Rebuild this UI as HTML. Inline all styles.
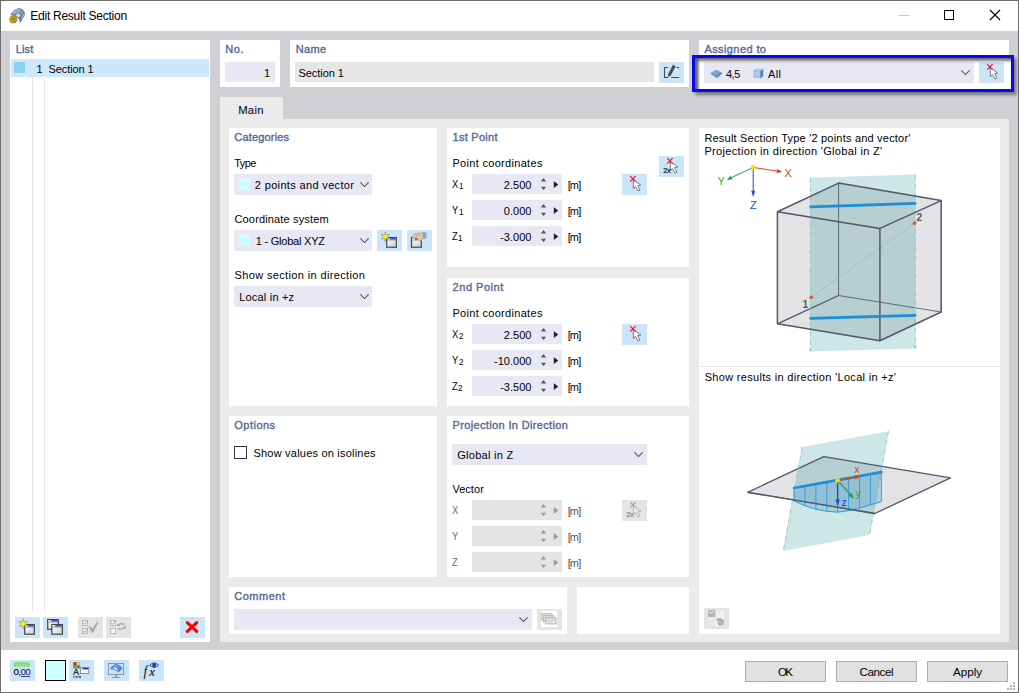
<!DOCTYPE html>
<html>
<head>
<meta charset="utf-8">
<title>Edit Result Section</title>
<style>
html,body{margin:0;padding:0;}
body{width:1019px;height:693px;overflow:hidden;background:#d0d0d4;font-family:"Liberation Sans",sans-serif;font-size:11px;color:#000;position:relative;}
.a{position:absolute;}
.t{position:absolute;white-space:nowrap;}
svg{position:absolute;overflow:visible;}
</style>
</head>
<body>
<div class="a" style="left:0px;top:0px;width:1019px;height:693px;background:#d0d0d4;"></div>
<div class="a" style="left:1px;top:1px;width:1017px;height:30px;background:#fff;"></div>
<div class="a" style="left:1px;top:650px;width:1017px;height:42px;background:#fff;"></div>
<div class="a" style="left:0;top:0;width:1017px;height:691px;border:1px solid #6e6e6e;"></div>
<div class="t" style="left:30.30px;top:8.84px;font-size:12px;line-height:14px;letter-spacing:-0.255px;">Edit Result Section</div>
<svg style="left:890px;top:5px" width="120" height="22" viewBox="0 0 120 22"><path d="M9 10.5 H19" stroke="#c4c4c4" stroke-width="1"/><rect x="54.5" y="5.5" width="9" height="9" fill="none" stroke="#000" stroke-width="1"/><path d="M100 5 L110 15 M110 5 L100 15" stroke="#000" stroke-width="1.1"/></svg>
<div class="a" style="left:699px;top:58px;width:312px;height:31px;background:#fff;"></div>
<div class="a" style="left:10px;top:40px;width:200px;height:602px;background:#fff;"></div>
<div class="t" style="left:15.80px;top:42.19px;font-size:11px;line-height:14px;letter-spacing:0.127px;color:#566a96;-webkit-text-stroke:0.38px #566a96;">List</div>
<div class="a" style="left:11px;top:59px;width:198px;height:18px;background:#cce8ff;"></div>
<div class="a" style="left:14px;top:62px;width:11px;height:11px;background:#8bd2ef;"></div>
<div class="a" style="left:32px;top:59px;width:1px;height:553px;background:#e6e6e6;"></div>
<div class="a" style="left:44px;top:59px;width:1px;height:553px;background:#e6e6e6;"></div>
<div class="t" style="left:36.60px;top:62.19px;font-size:11px;line-height:14px;">1</div>
<div class="t" style="left:48.60px;top:62.19px;font-size:11px;line-height:14px;letter-spacing:-0.108px;">Section 1</div>
<div class="a" style="left:15px;top:617px;width:25px;height:21px;background:#cce4f7;"></div>
<div class="a" style="left:43px;top:617px;width:25px;height:21px;background:#cce4f7;"></div>
<div class="a" style="left:78px;top:617px;width:25px;height:21px;background:#e4e4e4;"></div>
<div class="a" style="left:106px;top:617px;width:25px;height:21px;background:#e4e4e4;"></div>
<div class="a" style="left:180px;top:617px;width:25px;height:21px;background:#cce4f7;"></div>
<div class="a" style="left:220px;top:40px;width:60px;height:47px;background:#fff;"></div>
<div class="t" style="left:225.30px;top:42.19px;font-size:11px;line-height:14px;letter-spacing:0.541px;color:#566a96;-webkit-text-stroke:0.38px #566a96;">No.</div>
<div class="a" style="left:225px;top:62px;width:50px;height:20px;background:#e7e8f4;"></div>
<div class="t" style="left:263.88px;top:66.19px;font-size:11px;line-height:14px;">1</div>
<div class="a" style="left:290px;top:40px;width:399px;height:47px;background:#fff;"></div>
<div class="t" style="left:295.80px;top:42.19px;font-size:11px;line-height:14px;letter-spacing:0.286px;color:#566a96;-webkit-text-stroke:0.38px #566a96;">Name</div>
<div class="a" style="left:295px;top:62px;width:359px;height:20px;background:#e6e6e6;"></div>
<div class="t" style="left:298.50px;top:66.19px;font-size:11px;line-height:14px;letter-spacing:-0.058px;">Section 1</div>
<div class="a" style="left:659px;top:62px;width:25px;height:21px;background:#cce4f7;"></div>
<div class="a" style="left:699px;top:40px;width:310px;height:47px;background:#fff;"></div>
<div class="t" style="left:704.40px;top:42.19px;font-size:11px;line-height:14px;letter-spacing:0.412px;color:#566a96;-webkit-text-stroke:0.38px #566a96;">Assigned to</div>
<div class="a" style="left:704px;top:62px;width:270px;height:21px;background:#e7e8f4;"></div>
<div class="t" style="left:725.90px;top:66.79px;font-size:11px;line-height:14px;letter-spacing:-0.396px;">4,5</div>
<div class="t" style="left:768.00px;top:66.79px;font-size:11px;line-height:14px;letter-spacing:0.388px;">All</div>
<svg style="left:960px;top:70px" width="10" height="6" viewBox="0 0 10 6"><path d="M1.4 0.4 L5.5 4.5 L9.6 0.4" fill="none" stroke="#505050" stroke-width="1.05"/></svg>
<div class="a" style="left:979px;top:62px;width:25px;height:21px;background:#cce4f7;"></div>
<div class="a" style="left:220px;top:97px;width:63px;height:23px;background:#ebebeb;"></div>
<div class="a" style="left:220px;top:119px;width:789px;height:523px;background:#ebebeb;"></div>
<div class="t" style="left:238.20px;top:103.08px;font-size:11.3px;line-height:14px;letter-spacing:0.269px;">Main</div>
<div class="a" style="left:229px;top:128px;width:208px;height:278px;background:#fff;"></div>
<div class="t" style="left:234.30px;top:130.19px;font-size:11px;line-height:14px;letter-spacing:0.178px;color:#566a96;-webkit-text-stroke:0.38px #566a96;">Categories</div>
<div class="t" style="left:234.30px;top:156.19px;font-size:11px;line-height:14px;letter-spacing:-0.583px;">Type</div>
<div class="a" style="left:234px;top:174px;width:138px;height:21px;background:#e7e8f4;"></div>
<div class="a" style="left:239px;top:179px;width:11px;height:11px;background:#ccffff;"></div>
<div class="t" style="left:254.80px;top:178.19px;font-size:11px;line-height:14px;letter-spacing:0.347px;">2 points and vector</div>
<svg style="left:359px;top:182px" width="10" height="6" viewBox="0 0 10 6"><path d="M1.4 0.4 L5.5 4.5 L9.6 0.4" fill="none" stroke="#505050" stroke-width="1.05"/></svg>
<div class="t" style="left:234.50px;top:212.19px;font-size:11px;line-height:14px;letter-spacing:0.150px;">Coordinate system</div>
<div class="a" style="left:234px;top:230px;width:138px;height:21px;background:#e7e8f4;"></div>
<div class="a" style="left:239px;top:235px;width:11px;height:11px;background:#ccffff;"></div>
<div class="t" style="left:255.70px;top:234.19px;font-size:11px;line-height:14px;letter-spacing:-0.218px;">1 - Global XYZ</div>
<svg style="left:359px;top:238px" width="10" height="6" viewBox="0 0 10 6"><path d="M1.4 0.4 L5.5 4.5 L9.6 0.4" fill="none" stroke="#505050" stroke-width="1.05"/></svg>
<div class="a" style="left:377px;top:230px;width:25px;height:21px;background:#cce4f7;"></div>
<div class="a" style="left:407px;top:230px;width:25px;height:21px;background:#cce4f7;"></div>
<div class="t" style="left:234.50px;top:268.19px;font-size:11px;line-height:14px;letter-spacing:0.363px;">Show section in direction</div>
<div class="a" style="left:234px;top:286px;width:138px;height:21px;background:#e7e8f4;"></div>
<div class="t" style="left:239.20px;top:290.19px;font-size:11px;line-height:14px;letter-spacing:0.201px;">Local in +z</div>
<svg style="left:359px;top:294px" width="10" height="6" viewBox="0 0 10 6"><path d="M1.4 0.4 L5.5 4.5 L9.6 0.4" fill="none" stroke="#505050" stroke-width="1.05"/></svg>
<div class="a" style="left:447px;top:128px;width:242px;height:139px;background:#fff;"></div>
<div class="t" style="left:452.60px;top:130.19px;font-size:11px;line-height:14px;letter-spacing:0.262px;color:#566a96;-webkit-text-stroke:0.38px #566a96;">1st Point</div>
<div class="t" style="left:452.40px;top:156.19px;font-size:11px;line-height:14px;letter-spacing:0.313px;">Point coordinates</div>
<div class="a" style="left:472px;top:174px;width:90px;height:20px;background:#e7e8f4;"></div>
<div class="t" style="left:452.40px;top:177.19px;font-size:11px;line-height:14px;transform:scaleX(0.85);transform-origin:0 0;">X</div>
<div class="t" style="left:458.84px;top:178.88px;font-size:9px;line-height:14px;transform:scaleX(0.9);transform-origin:0 0;">1</div>
<div class="t" style="left:503.87px;top:178.19px;font-size:11px;line-height:14px;">2.500</div>
<svg style="left:472px;top:174px" width="90" height="20" viewBox="0 0 90 20"><path d="M68.8 7.5 L71.5 4.1 L74.2 7.5 Z M68.8 12.8 L71.5 15.9 L74.2 12.8 Z" fill="#5a5a5a"/><path d="M81.8 7.2 L86.3 10.6 L81.8 14.0 Z" fill="#202020"/></svg>
<div class="t" style="left:567.70px;top:178.19px;font-size:11px;line-height:14px;letter-spacing:-0.888px;">[m]</div>
<div class="a" style="left:472px;top:200px;width:90px;height:20px;background:#e7e8f4;"></div>
<div class="t" style="left:452.40px;top:203.19px;font-size:11px;line-height:14px;transform:scaleX(0.85);transform-origin:0 0;">Y</div>
<div class="t" style="left:458.84px;top:204.88px;font-size:9px;line-height:14px;transform:scaleX(0.9);transform-origin:0 0;">1</div>
<div class="t" style="left:503.87px;top:204.19px;font-size:11px;line-height:14px;">0.000</div>
<svg style="left:472px;top:200px" width="90" height="20" viewBox="0 0 90 20"><path d="M68.8 7.5 L71.5 4.1 L74.2 7.5 Z M68.8 12.8 L71.5 15.9 L74.2 12.8 Z" fill="#5a5a5a"/><path d="M81.8 7.2 L86.3 10.6 L81.8 14.0 Z" fill="#202020"/></svg>
<div class="t" style="left:567.70px;top:204.19px;font-size:11px;line-height:14px;letter-spacing:-0.888px;">[m]</div>
<div class="a" style="left:472px;top:226px;width:90px;height:20px;background:#e7e8f4;"></div>
<div class="t" style="left:452.40px;top:229.19px;font-size:11px;line-height:14px;transform:scaleX(0.85);transform-origin:0 0;">Z</div>
<div class="t" style="left:458.31px;top:230.88px;font-size:9px;line-height:14px;transform:scaleX(0.9);transform-origin:0 0;">1</div>
<div class="t" style="left:500.21px;top:230.19px;font-size:11px;line-height:14px;">-3.000</div>
<svg style="left:472px;top:226px" width="90" height="20" viewBox="0 0 90 20"><path d="M68.8 7.5 L71.5 4.1 L74.2 7.5 Z M68.8 12.8 L71.5 15.9 L74.2 12.8 Z" fill="#5a5a5a"/><path d="M81.8 7.2 L86.3 10.6 L81.8 14.0 Z" fill="#202020"/></svg>
<div class="t" style="left:567.70px;top:230.19px;font-size:11px;line-height:14px;letter-spacing:-0.888px;">[m]</div>
<div class="a" style="left:622px;top:174px;width:25px;height:21px;background:#cce4f7;"></div>
<div class="a" style="left:659px;top:156px;width:25px;height:21px;background:#cce4f7;"></div>
<div class="a" style="left:447px;top:278px;width:242px;height:128px;background:#fff;"></div>
<div class="t" style="left:452.60px;top:280.19px;font-size:11px;line-height:14px;letter-spacing:0.527px;color:#566a96;-webkit-text-stroke:0.38px #566a96;">2nd Point</div>
<div class="t" style="left:452.40px;top:306.19px;font-size:11px;line-height:14px;letter-spacing:0.313px;">Point coordinates</div>
<div class="a" style="left:472px;top:324px;width:90px;height:20px;background:#e7e8f4;"></div>
<div class="t" style="left:452.40px;top:327.19px;font-size:11px;line-height:14px;transform:scaleX(0.85);transform-origin:0 0;">X</div>
<div class="t" style="left:458.84px;top:328.88px;font-size:9px;line-height:14px;transform:scaleX(0.9);transform-origin:0 0;">2</div>
<div class="t" style="left:503.87px;top:328.19px;font-size:11px;line-height:14px;">2.500</div>
<svg style="left:472px;top:324px" width="90" height="20" viewBox="0 0 90 20"><path d="M68.8 7.5 L71.5 4.1 L74.2 7.5 Z M68.8 12.8 L71.5 15.9 L74.2 12.8 Z" fill="#5a5a5a"/><path d="M81.8 7.2 L86.3 10.6 L81.8 14.0 Z" fill="#202020"/></svg>
<div class="t" style="left:567.70px;top:328.19px;font-size:11px;line-height:14px;letter-spacing:-0.888px;">[m]</div>
<div class="a" style="left:472px;top:350px;width:90px;height:20px;background:#e7e8f4;"></div>
<div class="t" style="left:452.40px;top:353.19px;font-size:11px;line-height:14px;transform:scaleX(0.85);transform-origin:0 0;">Y</div>
<div class="t" style="left:458.84px;top:354.88px;font-size:9px;line-height:14px;transform:scaleX(0.9);transform-origin:0 0;">2</div>
<div class="t" style="left:494.09px;top:354.19px;font-size:11px;line-height:14px;">-10.000</div>
<svg style="left:472px;top:350px" width="90" height="20" viewBox="0 0 90 20"><path d="M68.8 7.5 L71.5 4.1 L74.2 7.5 Z M68.8 12.8 L71.5 15.9 L74.2 12.8 Z" fill="#5a5a5a"/><path d="M81.8 7.2 L86.3 10.6 L81.8 14.0 Z" fill="#202020"/></svg>
<div class="t" style="left:567.70px;top:354.19px;font-size:11px;line-height:14px;letter-spacing:-0.888px;">[m]</div>
<div class="a" style="left:472px;top:376px;width:90px;height:20px;background:#e7e8f4;"></div>
<div class="t" style="left:452.40px;top:379.19px;font-size:11px;line-height:14px;transform:scaleX(0.85);transform-origin:0 0;">Z</div>
<div class="t" style="left:458.31px;top:380.88px;font-size:9px;line-height:14px;transform:scaleX(0.9);transform-origin:0 0;">2</div>
<div class="t" style="left:500.21px;top:380.19px;font-size:11px;line-height:14px;">-3.500</div>
<svg style="left:472px;top:376px" width="90" height="20" viewBox="0 0 90 20"><path d="M68.8 7.5 L71.5 4.1 L74.2 7.5 Z M68.8 12.8 L71.5 15.9 L74.2 12.8 Z" fill="#5a5a5a"/><path d="M81.8 7.2 L86.3 10.6 L81.8 14.0 Z" fill="#202020"/></svg>
<div class="t" style="left:567.70px;top:380.19px;font-size:11px;line-height:14px;letter-spacing:-0.888px;">[m]</div>
<div class="a" style="left:622px;top:324px;width:25px;height:21px;background:#cce4f7;"></div>
<div class="a" style="left:229px;top:416px;width:208px;height:161px;background:#fff;"></div>
<div class="t" style="left:234.30px;top:418.19px;font-size:11px;line-height:14px;letter-spacing:0.482px;color:#566a96;-webkit-text-stroke:0.38px #566a96;">Options</div>
<div class="a" style="left:234px;top:446px;width:11px;height:11px;border:1px solid #333;background:#fff;"></div>
<div class="t" style="left:253.50px;top:446.19px;font-size:11px;line-height:14px;letter-spacing:0.209px;">Show values on isolines</div>
<div class="a" style="left:447px;top:416px;width:242px;height:161px;background:#fff;"></div>
<div class="t" style="left:452.60px;top:418.19px;font-size:11px;line-height:14px;letter-spacing:0.350px;color:#566a96;-webkit-text-stroke:0.38px #566a96;">Projection In Direction</div>
<div class="a" style="left:452px;top:444px;width:195px;height:21px;background:#e7e8f4;"></div>
<div class="t" style="left:457.30px;top:448.19px;font-size:11px;line-height:14px;letter-spacing:0.271px;">Global in Z</div>
<svg style="left:633px;top:452px" width="10" height="6" viewBox="0 0 10 6"><path d="M1.4 0.4 L5.5 4.5 L9.6 0.4" fill="none" stroke="#505050" stroke-width="1.05"/></svg>
<div class="t" style="left:452.40px;top:482.19px;font-size:11px;line-height:14px;letter-spacing:0.043px;">Vector</div>
<div class="a" style="left:472px;top:500px;width:90px;height:20px;background:#e4e4e4;"></div>
<div class="t" style="left:452.40px;top:503.19px;font-size:11px;line-height:14px;color:#6a6a6a;transform:scaleX(0.85);transform-origin:0 0;">X</div>
<svg style="left:472px;top:500px" width="90" height="20" viewBox="0 0 90 20"><path d="M68.8 7.5 L71.5 4.1 L74.2 7.5 Z M68.8 12.8 L71.5 15.9 L74.2 12.8 Z" fill="#9a9a9a"/><path d="M81.8 7.2 L86.3 10.6 L81.8 14.0 Z" fill="#9a9a9a"/></svg>
<div class="t" style="left:567.70px;top:504.19px;font-size:11px;line-height:14px;letter-spacing:-0.888px;color:#555;">[m]</div>
<div class="a" style="left:472px;top:526px;width:90px;height:20px;background:#e4e4e4;"></div>
<div class="t" style="left:452.40px;top:529.19px;font-size:11px;line-height:14px;color:#6a6a6a;transform:scaleX(0.85);transform-origin:0 0;">Y</div>
<svg style="left:472px;top:526px" width="90" height="20" viewBox="0 0 90 20"><path d="M68.8 7.5 L71.5 4.1 L74.2 7.5 Z M68.8 12.8 L71.5 15.9 L74.2 12.8 Z" fill="#9a9a9a"/><path d="M81.8 7.2 L86.3 10.6 L81.8 14.0 Z" fill="#9a9a9a"/></svg>
<div class="t" style="left:567.70px;top:530.19px;font-size:11px;line-height:14px;letter-spacing:-0.888px;color:#555;">[m]</div>
<div class="a" style="left:472px;top:552px;width:90px;height:20px;background:#e4e4e4;"></div>
<div class="t" style="left:452.40px;top:555.19px;font-size:11px;line-height:14px;color:#6a6a6a;transform:scaleX(0.85);transform-origin:0 0;">Z</div>
<svg style="left:472px;top:552px" width="90" height="20" viewBox="0 0 90 20"><path d="M68.8 7.5 L71.5 4.1 L74.2 7.5 Z M68.8 12.8 L71.5 15.9 L74.2 12.8 Z" fill="#9a9a9a"/><path d="M81.8 7.2 L86.3 10.6 L81.8 14.0 Z" fill="#9a9a9a"/></svg>
<div class="t" style="left:567.70px;top:556.19px;font-size:11px;line-height:14px;letter-spacing:-0.888px;color:#555;">[m]</div>
<div class="a" style="left:622px;top:500px;width:25px;height:21px;background:#e4e4e4;"></div>
<div class="a" style="left:229px;top:587px;width:338px;height:47px;background:#fff;"></div>
<div class="t" style="left:234.30px;top:589.19px;font-size:11px;line-height:14px;letter-spacing:0.503px;color:#566a96;-webkit-text-stroke:0.38px #566a96;">Comment</div>
<div class="a" style="left:234px;top:609px;width:298px;height:21px;background:#e7e8f4;"></div>
<svg style="left:518px;top:617px" width="10" height="6" viewBox="0 0 10 6"><path d="M1.4 0.4 L5.5 4.5 L9.6 0.4" fill="none" stroke="#505050" stroke-width="1.05"/></svg>
<div class="a" style="left:537px;top:609px;width:25px;height:21px;background:#e4e4e4;"></div>
<div class="a" style="left:577px;top:587px;width:112px;height:47px;background:#fff;"></div>
<div class="a" style="left:699px;top:128px;width:301px;height:506px;background:#fff;"></div>
<div class="t" style="left:704.40px;top:131.19px;font-size:11px;line-height:14px;letter-spacing:0.204px;">Result Section Type '2 points and vector'</div>
<div class="t" style="left:704.40px;top:144.19px;font-size:11px;line-height:14px;letter-spacing:0.339px;">Projection in direction 'Global in Z'</div>
<div class="a" style="left:699px;top:366px;width:301px;height:1px;background:#e4e4e4;"></div>
<div class="t" style="left:704.70px;top:370.19px;font-size:11px;line-height:14px;letter-spacing:0.311px;">Show results in direction 'Local in +z'</div>
<div class="a" style="left:704px;top:608px;width:25px;height:21px;background:#e4e4e4;"></div>
<div class="a" style="left:10px;top:660px;width:25px;height:21px;background:#cce4f7;"></div>
<div class="a" style="left:69px;top:660px;width:25px;height:21px;background:#cce4f7;"></div>
<div class="a" style="left:104px;top:660px;width:25px;height:21px;background:#cce4f7;"></div>
<div class="a" style="left:139px;top:660px;width:25px;height:21px;background:#cce4f7;"></div>
<div class="a" style="left:45px;top:660px;width:19px;height:19px;border:1px solid #000;background:#ccffff;"></div>
<div class="a" style="left:745px;top:661px;width:79px;height:19px;border:1px solid #adadad;background:#e1e1e1;"></div>
<div class="t" style="left:777.90px;top:665.38px;font-size:11.6px;line-height:14px;letter-spacing:-1.560px;">OK</div>
<div class="a" style="left:836px;top:661px;width:79px;height:19px;border:1px solid #adadad;background:#e1e1e1;"></div>
<div class="t" style="left:859.40px;top:665.38px;font-size:11.6px;line-height:14px;letter-spacing:-0.382px;">Cancel</div>
<div class="a" style="left:927px;top:661px;width:79px;height:19px;border:1px solid #adadad;background:#e1e1e1;"></div>
<div class="t" style="left:952.90px;top:665.38px;font-size:11.6px;line-height:14px;letter-spacing:0.046px;">Apply</div>
<div class="a" style="left:1013px;top:682px;width:2px;height:2px;background:#b4b4b4;"></div>
<div class="a" style="left:1010px;top:685px;width:2px;height:2px;background:#b4b4b4;"></div>
<div class="a" style="left:1013px;top:685px;width:2px;height:2px;background:#b4b4b4;"></div>
<div class="a" style="left:1007px;top:688px;width:2px;height:2px;background:#b4b4b4;"></div>
<div class="a" style="left:1010px;top:688px;width:2px;height:2px;background:#b4b4b4;"></div>
<div class="a" style="left:1013px;top:688px;width:2px;height:2px;background:#b4b4b4;"></div>
<svg width="0" height="0" style="left:0;top:0"><defs>
<linearGradient id="gw" x1="0" y1="0" x2="1" y2="1"><stop offset="0" stop-color="#ffffff"/><stop offset="1" stop-color="#cfcfcf"/></linearGradient>
<linearGradient id="gs" x1="0" y1="0" x2="1" y2="1"><stop offset="0" stop-color="#9cc4ea"/><stop offset="1" stop-color="#4f7fb8"/></linearGradient>
<linearGradient id="gm" x1="0" y1="0" x2="1" y2="1"><stop offset="0" stop-color="#9fb0d0"/><stop offset="1" stop-color="#2f416c"/></linearGradient>
<linearGradient id="gsl" x1="0" y1="0" x2="1" y2="0"><stop offset="0" stop-color="#4a78b8"/><stop offset="1" stop-color="#b8d0ea"/></linearGradient>
</defs></svg>
<svg style="left:8.5px;top:7.5px" width="17" height="16" viewBox="0 0 17 16"><path d="M1.6 6.8 Q4.5 1.6 9.2 0.5 Q14.6 0.2 15.9 6.2 L11.3 14.4 Q10.9 8.6 1.6 6.8 Z" fill="url(#gm)" stroke="#4b5f88" stroke-width="0.5"/>
<path d="M4.2 3.9 Q10.4 3.2 13.4 10.4 M6.4 2.0 Q12.6 1.6 14.9 8.0 M3.2 7.2 L9.2 0.6 M6.4 8.4 L11.8 0.9 M9.4 10.2 L14.4 2.6 M10.9 12.6 L15.6 5.0" stroke="#dfe6f4" stroke-width="0.7" fill="none" opacity="0.75"/>
<path d="M7.0 8.0 L9.6 9.2 L11.0 7.0 L8.6 5.8 Z" fill="#eef3ff" opacity="0.9"/>
<circle cx="4.3" cy="11.4" r="3.7" fill="#d9ac1c" stroke="#9c7a10" stroke-width="0.7"/>
<text x="1.9" y="14.5" font-family="Liberation Sans" font-weight="bold" font-size="8.4" fill="#f7dd55" stroke="#6b5a18" stroke-width="0.45">6</text></svg>
<svg style="left:15px;top:617px" width="25" height="21" viewBox="0 0 25 21"><rect x="9.7" y="7.6" width="9.600000000000001" height="9.600000000000001" fill="url(#gw)" stroke="#4a4a4a" stroke-width="1.25"/><rect x="10.299999999999999" y="8.2" width="8.4" height="1.6" fill="#dfe6f4"/><rect x="13.1" y="8.0" width="5.6000000000000005" height="1.6" fill="#2f4fe8"/><rect x="10.299999999999999" y="9.7" width="8.4" height="0.7" fill="#4a4a4a" opacity="0.6"/><polygon points="8.30,1.80 9.25,5.05 12.54,4.25 10.20,6.70 12.54,9.15 9.25,8.35 8.30,11.60 7.35,8.35 4.06,9.15 6.40,6.70 4.06,4.25 7.35,5.05" fill="#ffff00" stroke="#8a8a60" stroke-width="0.6"/></svg>
<svg style="left:43px;top:617px" width="25" height="21" viewBox="0 0 25 21"><rect x="4.699999999999999" y="2.6" width="10.600000000000001" height="9.700000000000001" fill="url(#gw)" stroke="#4a4a4a" stroke-width="1.25"/><rect x="5.3" y="3.2" width="9.4" height="1.6" fill="#dfe6f4"/><rect x="8.1" y="3.0" width="6.6000000000000005" height="1.6" fill="#2f4fe8"/><rect x="5.3" y="4.7" width="9.4" height="0.7" fill="#4a4a4a" opacity="0.6"/><rect x="8.799999999999999" y="7.6" width="10.600000000000001" height="9.600000000000001" fill="url(#gw)" stroke="#4a4a4a" stroke-width="1.25"/><rect x="9.399999999999999" y="8.2" width="9.4" height="1.6" fill="#dfe6f4"/><rect x="12.2" y="8.0" width="6.6000000000000005" height="1.6" fill="#2f4fe8"/><rect x="9.399999999999999" y="9.7" width="9.4" height="0.7" fill="#4a4a4a" opacity="0.6"/></svg>
<svg style="left:78px;top:617px" width="25" height="21" viewBox="0 0 25 21"><rect x="4.5" y="3.5" width="5" height="5" fill="#f4f4f4" stroke="#b4b4b4" stroke-width="0.9"/><path d="M5.2 5.6 L6.6 7.4 L9.6 3.2" fill="none" stroke="#a2a2a2" stroke-width="0.9"/><rect x="4.5" y="11.5" width="5" height="5" fill="#f4f4f4" stroke="#b4b4b4" stroke-width="0.9"/><path d="M5.2 13.6 L6.6 15.4 L9.6 11.2" fill="none" stroke="#a2a2a2" stroke-width="0.9"/><path d="M11.6 9.8 Q13.6 10.6 14.6 13.6 Q16.6 8.4 19.8 5.4 Q17.2 9.4 15.2 14.6 Q14.4 15.4 13.6 14.4 Q12.8 11.6 11.6 9.8 Z" fill="#a6a6a6" stroke="#a6a6a6" stroke-width="1.1" stroke-linejoin="round"/></svg>
<svg style="left:106px;top:617px" width="25" height="21" viewBox="0 0 25 21"><rect x="4.5" y="3.5" width="5" height="5" fill="#f4f4f4" stroke="#b4b4b4" stroke-width="0.9"/><path d="M5.2 5.6 L6.6 7.4 L9.6 3.2" fill="none" stroke="#a2a2a2" stroke-width="0.9"/><rect x="4.5" y="11.5" width="5" height="5" fill="#f4f4f4" stroke="#b4b4b4" stroke-width="0.9"/><path d="M11.6 8.6 Q14.6 5.4 18.6 7.4 M19.4 9.6 Q16.4 13.2 12.2 11.6" fill="none" stroke="#a8a8a8" stroke-width="1.2"/><path d="M11.2 6.4 L11.4 9.4 L14.2 8.6 Z M19.9 12.0 L19.6 8.8 L16.8 10.0 Z" fill="#a8a8a8"/></svg>
<svg style="left:180px;top:617px" width="25" height="21" viewBox="0 0 25 21"><path d="M7.3 5.6 L16.7 14.4 M16.7 5.6 L7.3 14.4" stroke="#ff0000" stroke-width="3.1" stroke-linecap="round"/></svg>
<svg style="left:659px;top:62px" width="25" height="21" viewBox="0 0 25 21"><path d="M9.0 5.5 H5.5 V15.5 H9.0" fill="none" stroke="#4a4a4a" stroke-width="1.1"/><path d="M12.2 15.5 H20.2 M17.4 5.5 H20.2" stroke="#4a4a4a" stroke-width="1.1"/><path d="M13.9 2.8 L16.7 4.2 L11.7 13.5 L9.3 15.3 L9.1 12.2 Z" fill="#4a4a4a"/></svg>
<svg style="left:710px;top:68px" width="14" height="11" viewBox="0 0 14 11"><path d="M0.9 5.3 L5.9 2.1 L12.1 4.9 L7.4 9.0 Z" fill="url(#gs)" stroke="#5f7fa8" stroke-width="0.5"/><path d="M0.9 5.3 L7.4 9.0 L12.1 4.9 L12.1 5.6 L7.4 9.9 L0.9 6.1 Z" fill="#4f729c"/></svg>
<svg style="left:753px;top:68px" width="11" height="11" viewBox="0 0 11 11"><path d="M0.8 2.6 L3.6 1.0 L10.0 1.4 L7.6 3.0 Z" fill="#c6dcf2" stroke="#7b9cc4" stroke-width="0.4"/><path d="M0.8 2.6 L7.6 3.0 L7.6 10.0 L0.8 9.2 Z" fill="#a7c9ee" stroke="#7b9cc4" stroke-width="0.4"/><path d="M7.6 3.0 L10.0 1.4 L10.0 8.2 L7.6 10.0 Z" fill="#5f86b6" stroke="#55769f" stroke-width="0.4"/></svg>
<svg style="left:979px;top:62px" width="25" height="21" viewBox="0 0 25 21"><polygon points="11.30,5.50 11.40,14.40 13.40,12.50 15.90,16.90 17.90,16.10 15.70,11.60 18.80,11.10" fill="#ffffff" stroke="#6c6c6c" stroke-width="0.9" stroke-linejoin="round"/><path d="M8.2 2.2 L13.600000000000001 7.6000000000000005 M13.600000000000001 2.2 L8.2 7.6000000000000005" stroke="#f0102a" stroke-width="1.2"/></svg>
<svg style="left:377px;top:230px" width="25" height="21" viewBox="0 0 25 21"><rect x="9.7" y="7.6" width="9.600000000000001" height="9.600000000000001" fill="url(#gw)" stroke="#4a4a4a" stroke-width="1.25"/><rect x="10.299999999999999" y="8.2" width="8.4" height="1.6" fill="#dfe6f4"/><rect x="13.1" y="8.0" width="5.6000000000000005" height="1.6" fill="#2f4fe8"/><rect x="10.299999999999999" y="9.7" width="8.4" height="0.7" fill="#4a4a4a" opacity="0.6"/><polygon points="8.30,1.80 9.25,5.05 12.54,4.25 10.20,6.70 12.54,9.15 9.25,8.35 8.30,11.60 7.35,8.35 4.06,9.15 6.40,6.70 4.06,4.25 7.35,5.05" fill="#ffff00" stroke="#8a8a60" stroke-width="0.6"/></svg>
<svg style="left:407px;top:230px" width="25" height="21" viewBox="0 0 25 21"><rect x="4.5" y="7.6" width="9.8" height="9.600000000000001" fill="url(#gw)" stroke="#4a4a4a" stroke-width="1.25"/><rect x="5.1" y="8.2" width="8.6" height="1.6" fill="#dfe6f4"/><rect x="7.9" y="8.0" width="5.8" height="1.6" fill="#2f4fe8"/><rect x="5.1" y="9.7" width="8.6" height="0.7" fill="#4a4a4a" opacity="0.6"/><path d="M15.4 2.6 L19.6 2.0 L20.2 8.6 L16.4 8.8 Z" fill="url(#gsl)"/>
<path d="M5.2 6.4 Q6.4 3.8 10.2 3.2 Q13.8 2.4 16.2 3.4 L16.6 8.4 Q15.0 10.6 12.6 10.6 Q10.8 10.2 10.4 8.2 Q8.2 8.0 5.6 7.8 Z" fill="#e7c7a6" stroke="#b08c68" stroke-width="0.5"/>
<path d="M8.4 5.2 Q10.8 5.0 12.2 6.0 M11.2 4.2 Q13.0 4.4 13.8 5.4" stroke="#b8946e" stroke-width="0.5" fill="none"/></svg>
<svg style="left:622px;top:174px" width="25" height="21" viewBox="0 0 25 21"><polygon points="11.30,5.50 11.40,14.40 13.40,12.50 15.90,16.90 17.90,16.10 15.70,11.60 18.80,11.10" fill="#ffffff" stroke="#6c6c6c" stroke-width="0.9" stroke-linejoin="round"/><path d="M8.2 2.2 L13.600000000000001 7.6000000000000005 M13.600000000000001 2.2 L8.2 7.6000000000000005" stroke="#f0102a" stroke-width="1.2"/></svg>
<svg style="left:659px;top:156px" width="25" height="21" viewBox="0 0 25 21"><polygon points="11.30,5.50 11.40,14.40 13.40,12.50 15.90,16.90 17.90,16.10 15.70,11.60 18.80,11.10" fill="#ffffff" stroke="#6c6c6c" stroke-width="0.9" stroke-linejoin="round"/><path d="M8.2 2.2 L13.600000000000001 7.6000000000000005 M13.600000000000001 2.2 L8.2 7.6000000000000005" stroke="#f0102a" stroke-width="1.2"/><text x="4.2" y="17.4" font-family="Liberation Sans" font-size="7.6" fill="#111" stroke="#111" stroke-width="0.2" letter-spacing="-0.4">2x</text></svg>
<svg style="left:622px;top:324px" width="25" height="21" viewBox="0 0 25 21"><polygon points="11.30,5.50 11.40,14.40 13.40,12.50 15.90,16.90 17.90,16.10 15.70,11.60 18.80,11.10" fill="#ffffff" stroke="#6c6c6c" stroke-width="0.9" stroke-linejoin="round"/><path d="M8.2 2.2 L13.600000000000001 7.6000000000000005 M13.600000000000001 2.2 L8.2 7.6000000000000005" stroke="#f0102a" stroke-width="1.2"/></svg>
<svg style="left:622px;top:500px" width="25" height="21" viewBox="0 0 25 21"><polygon points="11.30,5.50 11.40,14.40 13.40,12.50 15.90,16.90 17.90,16.10 15.70,11.60 18.80,11.10" fill="#ececec" stroke="#b0b0b0" stroke-width="0.9" stroke-linejoin="round"/><path d="M8.2 2.2 L13.600000000000001 7.6000000000000005 M13.600000000000001 2.2 L8.2 7.6000000000000005" stroke="#a0a0a0" stroke-width="1.2"/><text x="4.2" y="17.4" font-family="Liberation Sans" font-size="7.6" fill="#8a8a8a" stroke="#8a8a8a" stroke-width="0.2" letter-spacing="-0.4">2x</text></svg>
<svg style="left:537px;top:609px" width="25" height="21" viewBox="0 0 25 21"><rect x="4" y="2" width="16" height="16" fill="#fff"/><rect x="4.6000000000000005" y="4.6000000000000005" width="10.4" height="6.4" fill="#dcdcdc" stroke="#b2b2b2" stroke-width="0.8"/><rect x="6.6000000000000005" y="6.6000000000000005" width="10.4" height="6.4" fill="#dcdcdc" stroke="#b2b2b2" stroke-width="0.8"/><rect x="8.6" y="8.6" width="10.4" height="6.4" fill="#dcdcdc" stroke="#b2b2b2" stroke-width="0.8"/><path d="M14.6 12.4 L18.4 10.6 L18.4 14.6 L15.6 14.6 Z" fill="#f4f4f4" stroke="#aaa" stroke-width="0.5"/></svg>
<svg style="left:704px;top:608px" width="25" height="21" viewBox="0 0 25 21"><rect x="4" y="2" width="16" height="16" fill="#f6f6f6"/><rect x="4" y="2" width="7.6" height="7.2" fill="#b4b4b4"/><path d="M5 3.4 L7.4 5.2 L9.8 3.2" stroke="#f0f0f0" stroke-width="1" fill="none"/><rect x="11.6" y="2" width="8.4" height="7.6" fill="#eeeeee"/><rect x="4" y="10.4" width="8" height="7.6" fill="#e8e8e8"/><path d="M12.2 10.2 L17.0 10.2 L20.0 12.2 L19.0 17.6 L14.4 17.2 Z" fill="#a8a8a8"/><path d="M14.4 12.6 L16.2 15.2 L18.6 12.8" stroke="#e6e6e6" stroke-width="0.9" fill="none"/></svg>
<svg style="left:10px;top:660px" width="25" height="21" viewBox="0 0 25 21"><rect x="4.1" y="2.2" width="15.8" height="4.5" fill="#86d874"/><path d="M7 4.2 V6.7 M10 4.2 V6.7 M13 4.2 V6.7 M16 4.2 V6.7" stroke="#c6f0ba" stroke-width="0.8"/><text x="3.6" y="15.0" font-family="Liberation Sans" font-size="9.8" fill="#000" stroke="#000" stroke-width="0.12" letter-spacing="-0.7">0,</text><text x="10.6" y="15.0" font-family="Liberation Sans" font-size="9.8" fill="#1f2a7a" stroke="#1f2a7a" stroke-width="0.12" letter-spacing="-0.8">00</text><rect x="11.0" y="15.9" width="9.2" height="0.9" fill="#1f2a7a"/></svg>
<svg style="left:69px;top:660px" width="25" height="21" viewBox="0 0 25 21"><rect x="4.0" y="2.0" width="7.2" height="6.6" fill="#9a9a9a"/><rect x="4.7" y="2.6" width="2.8" height="2.6" fill="#ff1010"/><rect x="7.9" y="2.6" width="2.7" height="2.6" fill="#ffe800"/><rect x="4.7" y="5.5" width="2.8" height="2.6" fill="#10e020"/><rect x="7.9" y="5.5" width="2.7" height="2.6" fill="#4a6cf0"/><text x="4.2" y="15.4" font-family="Liberation Sans" font-size="8.6" fill="#000" stroke="#000" stroke-width="0.2">A</text><path d="M4.3 16.8 H5.4 M6.6 16.8 H8.6 M9.8 16.8 H12.0" stroke="#111" stroke-width="1.3"/><rect x="11.4" y="7.4" width="8.4" height="6.2" fill="#f4f4f4" stroke="#808080" stroke-width="0.8"/><rect x="13.4" y="7.8" width="6.0" height="1.6" fill="#2636a8"/></svg>
<svg style="left:104px;top:660px" width="25" height="21" viewBox="0 0 25 21"><rect x="4.4" y="3.4" width="15.2" height="11.0" fill="none" stroke="#8c8c8c" stroke-width="0.9"/><path d="M11.6 14.4 H12.9 V17.2 H11.6 Z" fill="#7a7a7a"/><path d="M8.0 17.5 H16.2" stroke="#8c8c8c" stroke-width="0.9"/><path d="M5.8 9.0 Q9.6 4.0 12.4 4.0 Q16.8 5.0 18.4 8.8 Q15.6 11.0 14.4 12.8 Q12.6 9.4 5.8 9.0 Z" fill="#4d7dca"/><path d="M8.6 8.6 Q10.8 6.8 12.2 7.6 Q13.6 9.4 14.2 11.2 Q12.6 9.2 8.6 8.6 Z" fill="#eaf2fc"/><path d="M9.4 6.4 L13.4 5.4 M12.6 5.0 L15.8 8.6" stroke="#a9c6ee" stroke-width="0.7"/></svg>
<svg style="left:139px;top:660px" width="25" height="21" viewBox="0 0 25 21"><text x="4.4" y="15.6" font-family="Liberation Serif" font-style="italic" font-size="13.6" fill="#111">f</text><text x="10.2" y="15.9" font-family="Liberation Serif" font-style="italic" font-size="12.6" fill="#111" stroke="#111" stroke-width="0.15">x</text><path d="M10.9 5.2 Q15.2 0.6 19.5 5.2 Q15.2 9.6 10.9 5.2 Z" fill="#f2f2fa" stroke="#4a2f90" stroke-width="1.0"/><circle cx="15.2" cy="5.1" r="2.2" fill="#2c4cc0"/><circle cx="15.2" cy="5.1" r="0.9" fill="#101850"/></svg>
<svg style="left:0;top:0" width="1019" height="693" viewBox="0 0 1019 693"><defs><clipPath id="bx"><polygon points="777.4,211.7 838.6,183.1 941.2,200.6 941.2,312.0 879.9,340.8 777.4,323.8"/></clipPath></defs><polygon points="810.4,177.8 915.3,174.6 915.3,348.4 810.4,351.4" fill="#cde7e7"/><polygon points="777.4,211.7 838.6,183.1 941.2,200.6 941.2,312.0 879.9,340.8 777.4,323.8" fill="#e3e3e5"/><polygon points="810.4,177.8 915.3,174.6 915.3,348.4 810.4,351.4" fill="#b6cfd0" clip-path="url(#bx)"/><path d="M838.6 183.1 L838.6 295.5 M838.6 295.5 L941.2 312.0" stroke="#55566a" stroke-width="1.0" fill="none" opacity="0.85"/><path d="M838.6 295.5 L777.4 323.8" stroke="#55566a" stroke-width="1.35"/><path d="M811 297.3 L914.5 223.2" stroke="#8cc4c4" stroke-width="0.7"/><path d="M810.4 177.8 L810.4 351.4 M915.3 174.6 L915.3 348.4" stroke="#8fc4c4" stroke-width="0.9" stroke-dasharray="5 1.5 1 1.5" fill="none"/><path d="M808.8 348.79999999999995 L810.4 351.79999999999995 L812.0 348.79999999999995 Z M913.6999999999999 345.79999999999995 L915.3 348.79999999999995 L916.9 345.79999999999995 Z" fill="#8fc4c4"/><path d="M777.4 211.7 L838.6 183.1 L941.2 200.6 L879.9 228.4 Z M777.4 211.7 L777.4 323.8 L879.9 340.8 L941.2 312.0 L941.2 200.6 M879.9 228.4 L879.9 340.8" stroke="#55566a" stroke-width="1.5" fill="none" stroke-linejoin="round"/><path d="M810.6 206.8 L915.2 203.4 M810.6 318.4 L915.2 315.3" stroke="#1b8fd8" stroke-width="2.7" stroke-linecap="round"/><circle cx="914.5" cy="223.2" r="1.9" fill="#c9683f"/><circle cx="811.2" cy="297.3" r="1.9" fill="#c9683f"/><text x="916.6" y="221.3" font-family="Liberation Sans" font-size="10.2" font-weight="bold" fill="#5a5a64">2</text><text x="802.6" y="307.5" font-family="Liberation Sans" font-size="10.2" font-weight="bold" fill="#5a5a64">1</text><path d="M753.2 167.4 L778.0 171.2" stroke="#d24a1e" stroke-width="1.0"/><path d="M782.4 171.8 L776.6 173.2 L777.2 169.0 Z" fill="#d24a1e"/><path d="M753.2 167.4 L731.0 177.8" stroke="#1fa346" stroke-width="1.0"/><path d="M726.8 179.9 L730.6 175.8 L732.4 179.6 Z" fill="#1fa346"/><path d="M753.2 167.4 L753.2 192.0" stroke="#2244d8" stroke-width="1.0"/><path d="M753.2 197.0 L751.2 190.8 L755.2 190.8 Z" fill="#2244d8"/><circle cx="753.2" cy="167.4" r="2.3" fill="#ffd800"/><text x="784.6" y="177.3" font-family="Liberation Sans" font-size="11" fill="#d24a1e">X</text><text x="717.6" y="185.3" font-family="Liberation Sans" font-size="11" fill="#1fa346">Y</text><text x="750.0" y="209.0" font-family="Liberation Sans" font-size="11" fill="#2244d8">Z</text><defs><clipPath id="gp"><polygon points="747.6,492.3 823.8,456.7 950.5,477.9 874.9,513.5"/></clipPath></defs><polygon points="802.2,447.0 888.5,431.2 869.5,535.1 783.2,551.0" fill="#cde7e7"/><polygon points="747.6,492.3 823.8,456.7 950.5,477.9 874.9,513.5" fill="#e3e3e5"/><polygon points="802.2,447.0 888.5,431.2 869.5,535.1 783.2,551.0" fill="#b6cfd0" clip-path="url(#gp)"/><polygon points="747.6,492.3 823.8,456.7 950.5,477.9 874.9,513.5" fill="none" stroke="#55566a" stroke-width="1.3" stroke-linejoin="round"/><path d="M802.2 447.0 L783.2 551.0 M888.5 431.2 L869.5 535.1" stroke="#8fc4c4" stroke-width="0.9" stroke-dasharray="5 1.5 1 1.5" fill="none"/><polygon points="794.0,488.0 804.9,486.0 815.9,484.1 826.8,482.1 837.7,480.1 848.6,478.1 859.5,476.1 870.5,474.2 881.4,472.2 881.4,501.6 870.5,504.8 859.5,508.1 848.6,510.7 837.7,512.2 826.8,511.3 815.9,509.2 804.9,505.7 794.0,501.0" fill="#5aa6d8" fill-opacity="0.36"/><path d="M794.0 488.0 L794.0 501.0 M804.9 486.0 L804.9 505.7 M815.9 484.1 L815.9 509.2 M826.8 482.1 L826.8 511.3 M837.7 480.1 L837.7 512.2 M848.6 478.1 L848.6 510.7 M859.5 476.1 L859.5 508.1 M870.5 474.2 L870.5 504.8 M881.4 472.2 L881.4 501.6 " stroke="#2b9be0" stroke-width="0.9" fill="none"/><path d="M794.0 501.0 L804.9 505.7 L815.9 509.2 L826.8 511.3 L837.7 512.2 L848.6 510.7 L859.5 508.1 L870.5 504.8 L881.4 501.6" stroke="#2b9be0" stroke-width="1.0" fill="none"/><path d="M794.0 488.0 L881.4 472.2" stroke="#1b8fd8" stroke-width="2.7" stroke-linecap="round"/><path d="M747.6 492.3 L874.9 513.5" stroke="#55566a" stroke-width="1.3" opacity="0.9"/><path d="M837.6 480.4 L856.0 477.3" stroke="#d24a1e" stroke-width="1.3"/><path d="M860.6 476.4 L855.0 479.6 L854.4 475.2 Z" fill="#d24a1e"/><path d="M837.6 480.4 L850.6 494.8" stroke="#1fa346" stroke-width="1.3"/><path d="M853.9 498.7 L848.2 496.0 L851.8 492.8 Z" fill="#1fa346"/><path d="M837.6 480.4 L837.6 500.6" stroke="#2244d8" stroke-width="1.3"/><path d="M837.6 506.2 L835.4 499.6 L839.8000000000001 499.6 Z" fill="#2244d8"/><circle cx="837.6" cy="480.4" r="2.4" fill="#ffd800"/><text x="854.2" y="473.0" font-family="Liberation Sans" font-size="10.5" fill="#d24a1e">x</text><text x="855.4" y="497.0" font-family="Liberation Sans" font-size="10.5" fill="#1fa346">y</text><text x="841.4" y="505.8" font-family="Liberation Sans" font-size="10.5" fill="#2244d8">z</text></svg>
<div class="a" style="left:692px;top:55px;width:316px;height:31px;border:3px solid #0808f0;box-shadow:2.5px 3px 3px rgba(0,0,0,0.42), inset 3px 3px 3px rgba(0,0,0,0.55);"></div>

</body>
</html>
